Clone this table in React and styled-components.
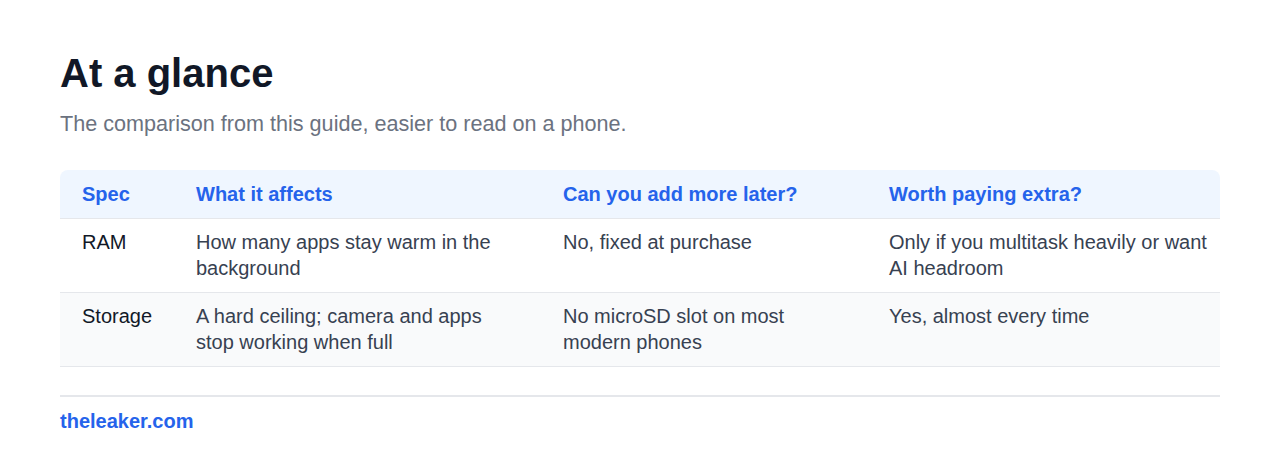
import React from 'react'
import styled, { createGlobalStyle } from 'styled-components'

const GlobalStyle = createGlobalStyle`
  body {
    margin: 0;
    background: #ffffff;
    font-family: "Liberation Sans", Arial, sans-serif;
  }
`

const Page = styled.div`
  box-sizing: border-box;
  width: 1280px;
  padding: 49px 60px 0;
`

const Title = styled.h1`
  margin: 0 0 13px;
  font-size: 40px;
  line-height: 48px;
  font-weight: 700;
  color: #111827;
`

const Subtitle = styled.p`
  margin: 0 0 32px;
  font-size: 21.6px;
  line-height: 28px;
  color: #6b7280;
`

const Table = styled.table`
  width: 100%;
  border-collapse: separate;
  border-spacing: 0;
  table-layout: fixed;
`

const cellPadding = `
  padding: 11px 22px;
  &:nth-child(3) { padding-right: 20px; }
  &:last-child { padding-right: 6px; }
`

const HeadCell = styled.th`
  ${cellPadding}
  text-align: left;
  font-size: 20px;
  line-height: 26px;
  font-weight: 700;
  color: #2563eb;
  background: #eff6ff;
  border-bottom: 1px solid #e5e7eb;
  &:first-child { border-top-left-radius: 8px; }
  &:last-child { border-top-right-radius: 8px; }
`

const Row = styled.tr`
  background: ${props => (props.$striped ? '#f9fafb' : '#ffffff')};
`

const Cell = styled.td`
  ${cellPadding}
  padding-top: 10px;
  vertical-align: top;
  font-size: 20px;
  line-height: 26px;
  color: ${props => (props.$spec ? '#111827' : '#374151')};
  border-bottom: 1px solid #e5e7eb;
`

const Footer = styled.div`
  margin-top: 28px;
  border-top: 2px solid #e5e7eb;
  padding-top: 12px;
`

const Brand = styled.span`
  font-size: 20px;
  line-height: 24px;
  font-weight: 700;
  color: #2563eb;
`

const columns = [
    { label: 'Spec', width: 114 },
    { label: 'What it affects', width: 367 },
    { label: 'Can you add more later?', width: 326 },
    { label: 'Worth paying extra?', width: 353 }
]

const rows = [
    ['RAM', 'How many apps stay warm in the background', 'No, fixed at purchase', 'Only if you multitask heavily or want AI headroom'],
    ['Storage', 'A hard ceiling; camera and apps stop working when full', 'No microSD slot on most modern phones', 'Yes, almost every time']
]

const App = () => {
    return (
        <Page>
            <GlobalStyle />
            <Title>At a glance</Title>
            <Subtitle>The comparison from this guide, easier to read on a phone.</Subtitle>
            <Table>
                <colgroup>
                    {columns.map(c => <col key={c.label} style={{ width: c.width }} />)}
                </colgroup>
                <thead>
                    <tr>
                        {columns.map(c => <HeadCell key={c.label}>{c.label}</HeadCell>)}
                    </tr>
                </thead>
                <tbody>
                    {rows.map((r, i) => (
                        <Row key={r[0]} $striped={i % 2 === 1}>
                            {r.map((text, j) => (
                                <Cell key={j} $spec={j === 0}>{text}</Cell>
                            ))}
                        </Row>
                    ))}
                </tbody>
            </Table>
            <Footer>
                <Brand>theleaker.com</Brand>
            </Footer>
        </Page>
    )
}

export default App
